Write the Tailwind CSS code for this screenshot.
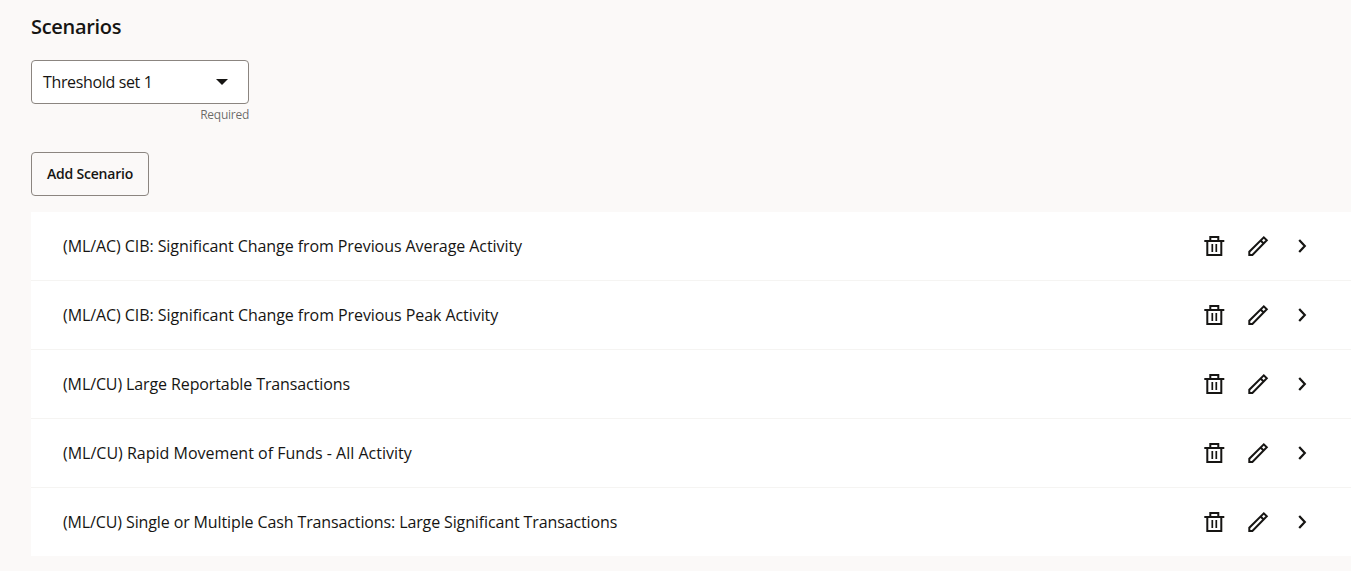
<!DOCTYPE html>
<html lang="en">
<head>
<meta charset="utf-8">
<meta name="viewport" content="width=device-width,initial-scale=1">
<title>Scenarios</title>
<script src="https://cdn.jsdelivr.net/npm/@tailwindcss/browser@4"></script>
</head>
<body class="bg-[#fbf9f8] text-[#161513] font-['Open_Sans','Noto_Sans',sans-serif] overflow-hidden">

<!-- ICONS -->
<svg class="hidden">
  <symbol id="trash" viewBox="0 0 24 24">
    <path fill="none" stroke="currentColor" stroke-width="2" d="M2.3 7h20M8.3 7V3h8v4M5.3 7v14h14V7"/>
    <path fill="none" stroke="currentColor" stroke-width="1.7" d="M10.3 10v8M14.3 10v8"/>
  </symbol>
  <symbol id="pencil" viewBox="0 0 24 24">
    <path fill="none" stroke="currentColor" stroke-width="2" d="M3.3 21v-3.3L17.8 3.3l3 3L6.4 21zM14.6 6.5l3 3"/>
  </symbol>
  <symbol id="chevron" viewBox="0 0 24 24">
    <path fill="none" stroke="currentColor" stroke-width="2.2" d="M9.2 6l5.6 6-5.6 6"/>
  </symbol>
</svg>

<main class="pl-[31px] pt-3">
  <h1 class="h-[30px] text-xl leading-[30px] font-semibold tracking-[-0.3px]">Scenarios</h1>

  <!-- THRESHOLD SELECT -->
  <div class="mt-[18px] w-[218px]">
    <button class="flex h-11 w-full items-center justify-between rounded-[4px] border border-[#8b8580] bg-white pr-5 pl-[11px]">
      <span class="tracking-[-0.35px]">Threshold set 1</span>
      <svg class="h-[6px] w-3" viewBox="0 0 12 6"><path fill="currentColor" d="M0 0h12L6 6z"/></svg>
    </button>
    <p class="mt-[3px] text-right text-xs leading-4 tracking-[-0.25px] text-[#161513]/65">Required</p>
  </div>

  <button class="mt-[29px] flex h-11 w-[118px] items-center justify-center rounded-[4px] border border-[#8b8580] text-sm font-semibold tracking-[-0.2px]">Add Scenario</button>

  <!-- LIST -->
  <ul id="list" class="mt-4 divide-y divide-[#f5f4f2] bg-white"></ul>
</main>

<script>
const scenarios = [
  ['(ML/AC) CIB: Significant Change from Previous Average Activity', 'tracking-[-0.075px]'],
  ['(ML/AC) CIB: Significant Change from Previous Peak Activity', 'tracking-[-0.07px]'],
  ['(ML/CU) Large Reportable Transactions', 'tracking-[-0.11px]'],
  ['(ML/CU) Rapid Movement of Funds - All Activity', 'tracking-[0.005px]'],
  ['(ML/CU) Single or Multiple Cash Transactions: Large Significant Transactions', 'tracking-[-0.12px]']
];
const icon = (id, label) => `<button aria-label="${label}"><svg class="block size-6"><use href="#${id}"/></svg></button>`;

document.getElementById('list').innerHTML = scenarios.map(([name, tracking]) => `
  <li class="flex h-[69px] items-center justify-between pr-[37px] pl-8 last:h-[68px]">
    <span class="whitespace-nowrap ${tracking}">${name}</span>
    <div class="flex gap-5">${icon('trash', 'Delete')}${icon('pencil', 'Edit')}${icon('chevron', 'Open')}</div>
  </li>`).join('');
</script>
</body>
</html>
